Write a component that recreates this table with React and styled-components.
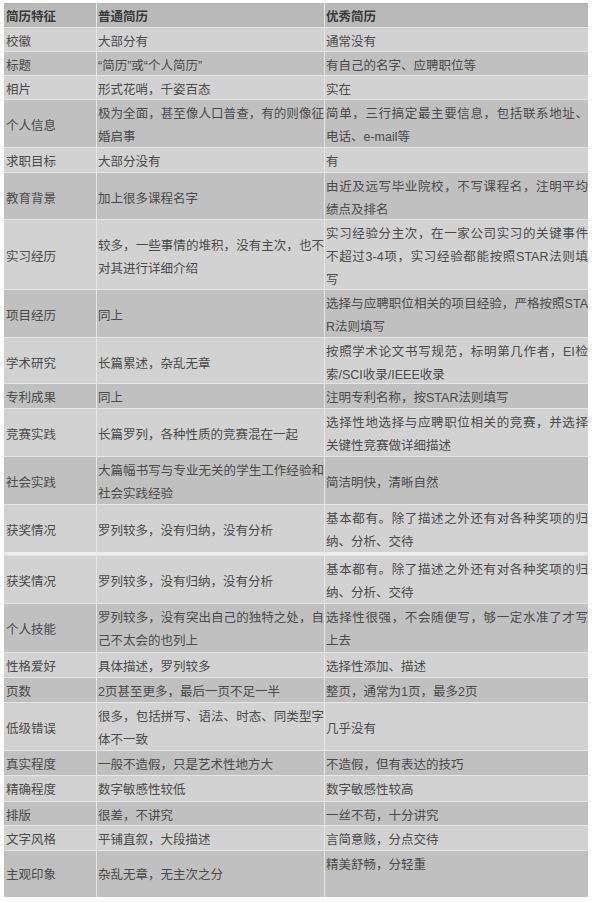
import styled, { createGlobalStyle } from 'styled-components'

const partOne = [
  { name: '校徽', normal: ['大部分有'], good: ['通常没有'], h: 24 },
  { name: '标题', normal: ['“简历”或“个人简历”'], good: ['有自己的名字、应聘职位等'], h: 24 },
  { name: '相片', normal: ['形式花哨，千姿百态'], good: ['实在'], h: 24 },
  {
    name: '个人信息',
    normal: ['极为全面，甚至像人口普查，有的则像征', '婚启事'],
    good: ['简单，三行搞定最主要信息，包括联系地址、', '电话、e-mail等'],
    h: 48,
  },
  { name: '求职目标', normal: ['大部分没有'], good: ['有'], h: 25 },
  {
    name: '教育背景',
    normal: ['加上很多课程名字'],
    good: ['由近及远写毕业院校，不写课程名，注明平均', '绩点及排名'],
    h: 47,
  },
  {
    name: '实习经历',
    normal: ['较多，一些事情的堆积，没有主次，也不', '对其进行详细介绍'],
    good: ['实习经验分主次，在一家公司实习的关键事件', '不超过3-4项，实习经验都能按照STAR法则填', '写'],
    h: 70,
  },
  {
    name: '项目经历',
    normal: ['同上'],
    good: ['选择与应聘职位相关的项目经验，严格按照STA', 'R法则填写'],
    h: 48,
  },
  {
    name: '学术研究',
    normal: ['长篇累述，杂乱无章'],
    good: ['按照学术论文书写规范，标明第几作者，EI检', '索/SCI收录/IEEE收录'],
    h: 46,
  },
  { name: '专利成果', normal: ['同上'], good: ['注明专利名称，按STAR法则填写'], h: 25 },
  {
    name: '竞赛实践',
    normal: ['长篇罗列，各种性质的竞赛混在一起'],
    good: ['选择性地选择与应聘职位相关的竞赛，并选择', '关键性竞赛做详细描述'],
    h: 48,
  },
  {
    name: '社会实践',
    normal: ['大篇幅书写与专业无关的学生工作经验和', '社会实践经验'],
    good: ['简洁明快，清晰自然'],
    h: 48,
  },
  {
    name: '获奖情况',
    normal: ['罗列较多，没有归纳，没有分析'],
    good: ['基本都有。除了描述之外还有对各种奖项的归', '纳、分析、交待'],
    h: 48,
  },
]

const partTwo = [
  {
    name: '获奖情况',
    normal: ['罗列较多，没有归纳，没有分析'],
    good: ['基本都有。除了描述之外还有对各种奖项的归', '纳、分析、交待'],
    h: 48,
  },
  {
    name: '个人技能',
    normal: ['罗列较多，没有突出自己的独特之处，自', '己不太会的也列上'],
    good: ['选择性很强，不会随便写，够一定水准了才写', '上去'],
    h: 49,
  },
  { name: '性格爱好', normal: ['具体描述，罗列较多'], good: ['选择性添加、描述'], h: 25 },
  { name: '页数', normal: ['2页甚至更多，最后一页不足一半'], good: ['整页，通常为1页，最多2页'], h: 25 },
  {
    name: '低级错误',
    normal: ['很多，包括拼写、语法、时态、同类型字', '体不一致'],
    good: ['几乎没有'],
    h: 48,
  },
  { name: '真实程度', normal: ['一般不造假，只是艺术性地方大'], good: ['不造假，但有表达的技巧'], h: 25 },
  { name: '精确程度', normal: ['数字敏感性较低'], good: ['数字敏感性较高'], h: 26 },
  { name: '排版', normal: ['很差，不讲究'], good: ['一丝不苟，十分讲究'], h: 24 },
  { name: '文字风格', normal: ['平铺直叙，大段描述'], good: ['言简意赅，分点交待'], h: 25 },
  { name: '主观印象', normal: ['杂乱无章，无主次之分'], good: ['精美舒畅，分轻重'], h: 47, top: true },
]

const GlobalStyle = createGlobalStyle`
  body {
    margin: 0;
    background: #ffffff;
    font-family: 'Liberation Sans', 'Noto Sans CJK SC', sans-serif;
  }
`

const Page = styled.div`
  padding: 3px 0 0 4px;
`

const Table = styled.div`
  width: 584px;
  display: flex;
  flex-direction: column;
  font-size: 12.5px;
  color: #4a4a4a;
`

const Row = styled.div`
  box-sizing: border-box;
  height: ${({ $h }) => $h}px;
  display: grid;
  grid-template-columns: 92px 228px 264px;
  background: ${({ $tone }) =>
    $tone === 'head' ? '#b9b9b9' : $tone === 'dark' ? '#c0c0c0' : '#d2d2d2'};
  border-top: ${({ $first }) => ($first ? 'none' : '1px solid #e6e6e6')};
  font-weight: ${({ $tone }) => ($tone === 'head' ? 700 : 400)};
  color: ${({ $tone }) => ($tone === 'head' ? '#3a3a3a' : '#4a4a4a')};
`

const Cell = styled.div`
  display: flex;
  flex-direction: column;
  justify-content: ${({ $top }) => ($top ? 'flex-start' : 'center')};
  padding: 3px 0 0 ${({ $pad }) => $pad}px;
  border-left: ${({ $edge }) => ($edge ? 'none' : '1px solid #e6e6e6')};
  line-height: 23px;
  overflow: visible;
`

const Line = styled.span`
  display: block;
  white-space: nowrap;
  text-align: left;
  text-align-last: ${({ $fill }) => ($fill ? 'justify' : 'auto')};
`

const Seam = styled.div`
  height: 3px;
  background: #ececec;
`

const Lines = ({ lines }) =>
  lines.map((line, i) => (
    <Line key={i} $fill={i < lines.length - 1}>
      {line}
    </Line>
  ))

const BodyRows = ({ rows }) =>
  rows.map((row, i) => (
    <Row key={row.name + i} $h={row.h} $tone={i % 2 ? 'dark' : 'light'}>
      <Cell $edge $pad={2}>
        <Line>{row.name}</Line>
      </Cell>
      <Cell $pad={1}>
        <Lines lines={row.normal} />
      </Cell>
      <Cell $pad={1} $top={row.top}>
        <Lines lines={row.good} />
      </Cell>
    </Row>
  ))

const App = () => {
  return (
    <Page>
      <GlobalStyle />
      <Table>
        <Row $h={24} $tone="head" $first>
          <Cell $edge $pad={2}>
            <Line>简历特征</Line>
          </Cell>
          <Cell $pad={1}>
            <Line>普通简历</Line>
          </Cell>
          <Cell $pad={1}>
            <Line>优秀简历</Line>
          </Cell>
        </Row>
        <BodyRows rows={partOne} />
        <Seam />
        <BodyRows rows={partTwo} />
      </Table>
    </Page>
  )
}

export default App
